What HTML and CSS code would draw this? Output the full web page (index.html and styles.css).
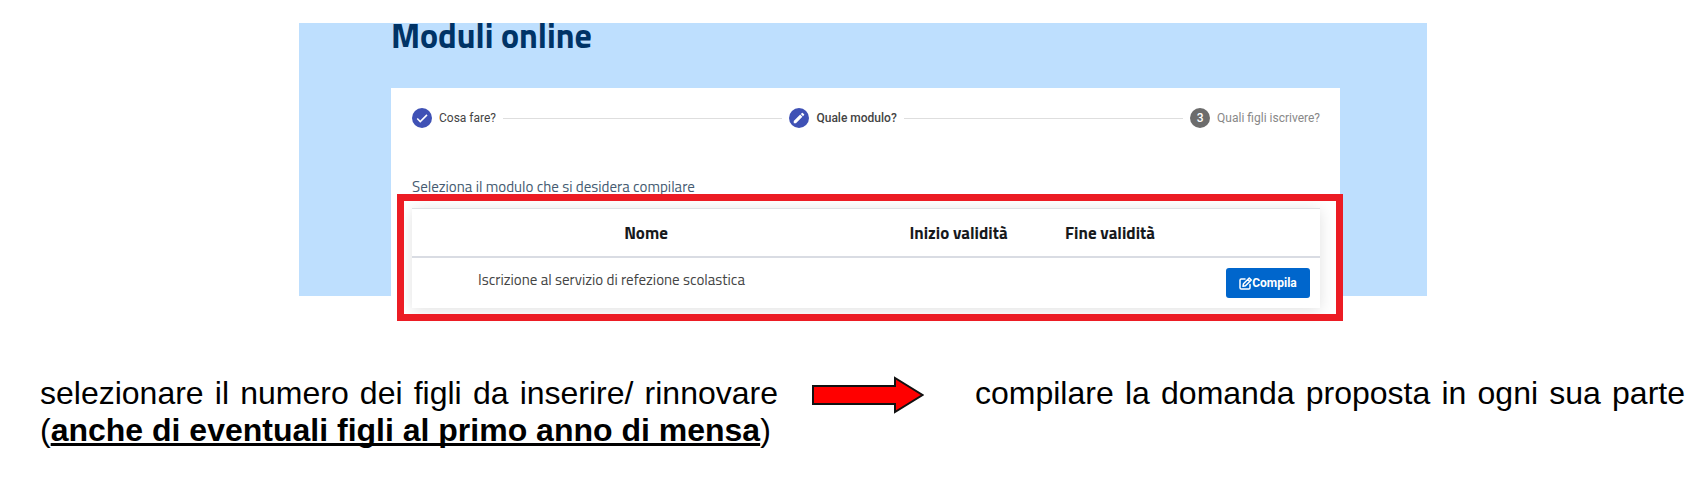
FILE: index.html
```html
<!DOCTYPE html>
<html lang="it">
<head>
<meta charset="utf-8" />
<title>Moduli online</title>
<link rel="stylesheet" href="styles.css">
</head>

<body>
<section class="portal">
<h1>Moduli online</h1>

<div class="card">

<ol class="stepper">
<li class="step">
<span class="badge">
<svg width="14" height="14" viewBox="0 0 24 24"><path d="M9 16.2 4.8 12l-1.9 1.9L9 20 21.5 7.500 19.600 5.600z" fill="#fff"/></svg>
</span>
Cosa fare?
</li>
<li class="line"></li>
<li class="step active">
<span class="badge">
<svg width="14" height="14" viewBox="0 0 24 24"><path d="M3 17.250V21h3.750L17.810 9.940l-3.750-3.750L3 17.250zM20.710 7.040a1 1 0 0 0 0-1.410l-2.340-2.340a1 1 0 0 0-1.410 0l-1.830 1.830 3.750 3.750 1.830-1.830z" fill="#fff"/></svg>
</span>
Quale modulo?
</li>
<li class="line"></li>
<li class="step todo">
<span class="badge">3</span>
Quali figli iscrivere?
</li>
</ol>

<p class="hint">Seleziona il modulo che si desidera compilare</p>

<div class="tableBox">
<table>
<thead>
<tr>
<th>Nome</th>
<th class="colInizio">Inizio validità</th>
<th class="colFine">Fine validità</th>
<th class="colAzioni"></th>
</tr>
</thead>
<tbody>
<tr>
<td class="nome">Iscrizione al servizio di refezione scolastica</td>
<td></td>
<td></td>
<td class="azioni">
<button type="button" class="btn">
<svg width="13" height="13" viewBox="0 0 26 26" fill="none" stroke="#fff" stroke-width="3" stroke-linejoin="round" stroke-linecap="round"><path d="M12 4H4.500A2.500 2.500 0 0 0 2 6.500v15A2.500 2.500 0 0 0 4.500 24h15a2.500 2.500 0 0 0 2.500-2.500V15"/><path d="M9 13.500 20.500 2l4 4L13 17.500l-5 1zM17.500 5l4 4"/></svg>Compila
</button>
</td>
</tr>
</tbody>
</table>
<div class="highlight"></div>
</div>

</div>
</section>

<section class="notes">
<p class="note">selezionare il numero dei figli da inserire/ rinnovare (<strong>anche di eventuali figli al primo anno di mensa</strong>)</p>
<svg class="arrow" width="112" height="42" viewBox="0 0 112 42"><path d="M1 11H83V3L110.500 20 83 37V29H1z" fill="#f00" stroke="#111" stroke-width="2"/></svg>
<p class="note full">compilare la domanda proposta in ogni sua parte</p>
</section>
</body>
</html>
```
FILE: styles.css
```css
body {
  margin: 0;
  background-color: #fff;
  font-family: "Titillium Web", Roboto, sans-serif;
}

/* light blue band, the card hangs out of it at the bottom */
.portal {
  margin: 23px 265px 0 299px;
  padding: 0 87px 0 92px;
  background: linear-gradient(#bedffe, #bedffe) no-repeat;
  background-size: 100% 273px;
}

h1 {
  margin: 0;
  height: 65px;
  font-size: 34px;
  line-height: 25px;
  font-weight: bold;
  color: #003366;
}

.card {
  background-color: #fff;
  padding: 20px 20px 13px 21px;
}

.stepper {
  display: flex;
  align-items: center;
  margin: 0;
  padding: 0;
  list-style: none;
  font-family: Roboto, sans-serif;
  font-size: 12px;
  line-height: 20px;
  color: #444;
}

.step {
  display: flex;
  align-items: center;
  gap: 7px;
}

.step.active {
  font-weight: 500;
}

.step.todo {
  color: #888;
}

.badge {
  display: flex;
  align-items: center;
  justify-content: center;
  width: 20px;
  height: 20px;
  border-radius: 50%;
  background-color: #3f51b5;
}

.todo .badge {
  background-color: #6c6c6c;
  color: #fff;
  font-weight: 500;
}

.line {
  flex: 1;
  height: 1px;
  margin: 0 7px;
  background-color: #dedede;
}

.hint {
  margin: 47px 0 10px;
  font-size: 15px;
  line-height: 23px;
  color: #455b71;
}

.tableBox {
  position: relative;
}

table {
  width: 100%;
  table-layout: fixed;
  border-collapse: collapse;
  box-shadow: 0 2px 14px rgba(0, 0, 0, .12);
}

th, td {
  padding: 0;
}

th {
  height: 47px;
  border-top: 1px solid #dee0e4;
  border-bottom: 2px solid #d9dce3;
  background-color: #fff;
  font-size: 17px;
  font-weight: bold;
  color: #17191c;
}

td {
  height: 50px;
  background-color: #fff;
  font-size: 15px;
  color: #444;
}

.colInizio {
  width: 157px;
}

.colFine {
  width: 146px;
}

.colAzioni {
  width: 137px;
}

.nome {
  height: 42px;
  padding: 0 0 8px 66px;
}

.azioni {
  padding-right: 10px;
  text-align: right;
}

.btn {
  display: inline-flex;
  align-items: center;
  justify-content: center;
  width: 84px;
  height: 30px;
  padding: 0;
  border: 0;
  border-radius: 3px;
  background-color: #0066cc;
  color: #fff;
  font-family: Roboto, sans-serif;
  font-size: 12px;
  font-weight: bold;
  vertical-align: middle;
}

/* red frame drawn over the table */
.highlight {
  position: absolute;
  top: -14px;
  right: -23px;
  bottom: -13px;
  left: -15px;
  border: 7px solid #ec1c24;
  box-sizing: border-box;
  pointer-events: none;
}

.notes {
  display: flex;
  align-items: flex-start;
  margin-top: 54px;
  padding: 0 7px 0 40px;
  font-family: "Liberation Sans", Arial, sans-serif;
  font-size: 32px;
  line-height: 37px;
  color: #000;
}

.note {
  flex: 738 1 0;
  margin: 0;
  text-align: justify;
}

.full {
  flex-grow: 710;
  text-align-last: justify;
}

.note strong {
  text-decoration: underline;
  text-decoration-thickness: 3px;
  text-decoration-skip-ink: none;
}

.arrow {
  flex: none;
  margin: 0 51px 0 34px;
}
```
